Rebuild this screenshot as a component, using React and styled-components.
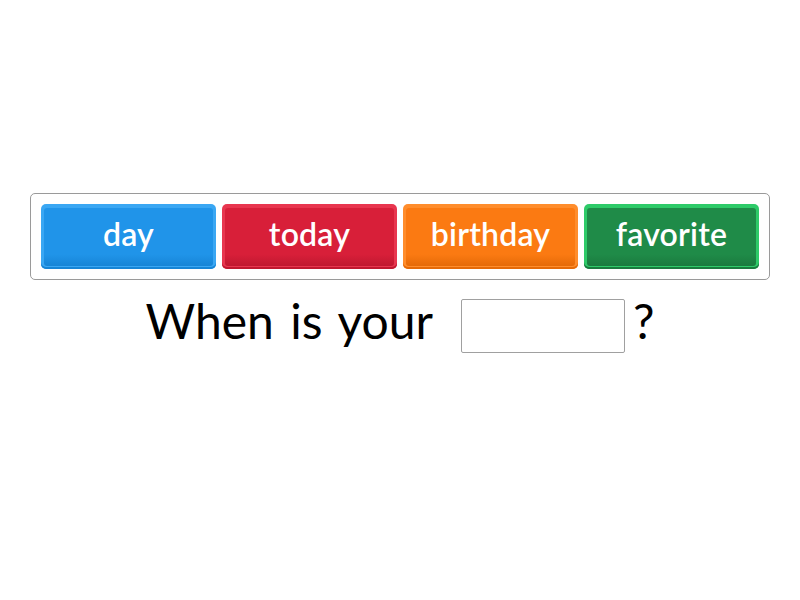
import React from "react";
import styled, { createGlobalStyle } from "styled-components";

const Global = createGlobalStyle`
  html, body { margin: 0; padding: 0; background: #fff; }
  body { font-family: Lato, "Noto Sans", sans-serif; }
`;

const Page = styled.div`
  width: 800px;
  height: 600px;
  padding-top: 193px;
  box-sizing: border-box;
  display: flex;
  flex-direction: column;
  align-items: center;
`;

const Bank = styled.div`
  width: 740px;
  box-sizing: border-box;
  border: 1px solid #9a9a9a;
  border-radius: 5px;
  padding: 10px 10px 10px 10px;
  display: grid;
  grid-template-columns: repeat(4, 1fr);
  gap: 6px;
`;

const Tile = styled.div`
  height: 65px;
  box-sizing: border-box;
  border-radius: 5px;
  background: ${(p) => p.$edge};
  padding: 4px 3px 3px 3px;
  box-shadow: inset 0 -2px 0 ${(p) => p.$shade};
  display: flex;
`;

const TileFace = styled.div`
  flex: 1;
  border-radius: 3px;
  background: linear-gradient(${(p) => p.$face}, ${(p) => p.$face} 80%, ${(p) => p.$shade});
  display: flex;
  align-items: center;
  justify-content: center;
  color: #fff;
  font-size: 32px;
  font-weight: 600;
  padding-bottom: 8px;
  letter-spacing: 0.2px;
`;

const Sentence = styled.div`
  margin-top: 12px;
  display: flex;
  align-items: flex-start;
  font-size: 48px;
  line-height: 58px;
  color: #000;
  word-spacing: 4px;
`;

const Blank = styled.div`
  width: 164px;
  height: 54px;
  box-sizing: border-box;
  border: 1px solid #a0a0a0;
  border-radius: 2px;
  margin: 7px 8px 0 28px;
`;

const tiles = [
  { text: "day", edge: "#3aa7f3", face: "#2094e9", shade: "#1785d6" },
  { text: "today", edge: "#e8364f", face: "#d81f39", shade: "#c01830" },
  { text: "birthday", edge: "#ff8d2c", face: "#fb7a12", shade: "#e56a08" },
  { text: "favorite", edge: "#2ecb69", face: "#1f8b48", shade: "#1a7a3e" },
];

export default function App() {
  return (
    <>
      <Global />
      <Page>
        <Bank>
          {tiles.map((t) => (
            <Tile key={t.text} $edge={t.edge} $shade={t.shade}>
              <TileFace $face={t.face} $shade={t.shade}>{t.text}</TileFace>
            </Tile>
          ))}
        </Bank>
        <Sentence>
          <span>When is your</span>
          <Blank />
          <span>?</span>
        </Sentence>
      </Page>
    </>
  );
}
